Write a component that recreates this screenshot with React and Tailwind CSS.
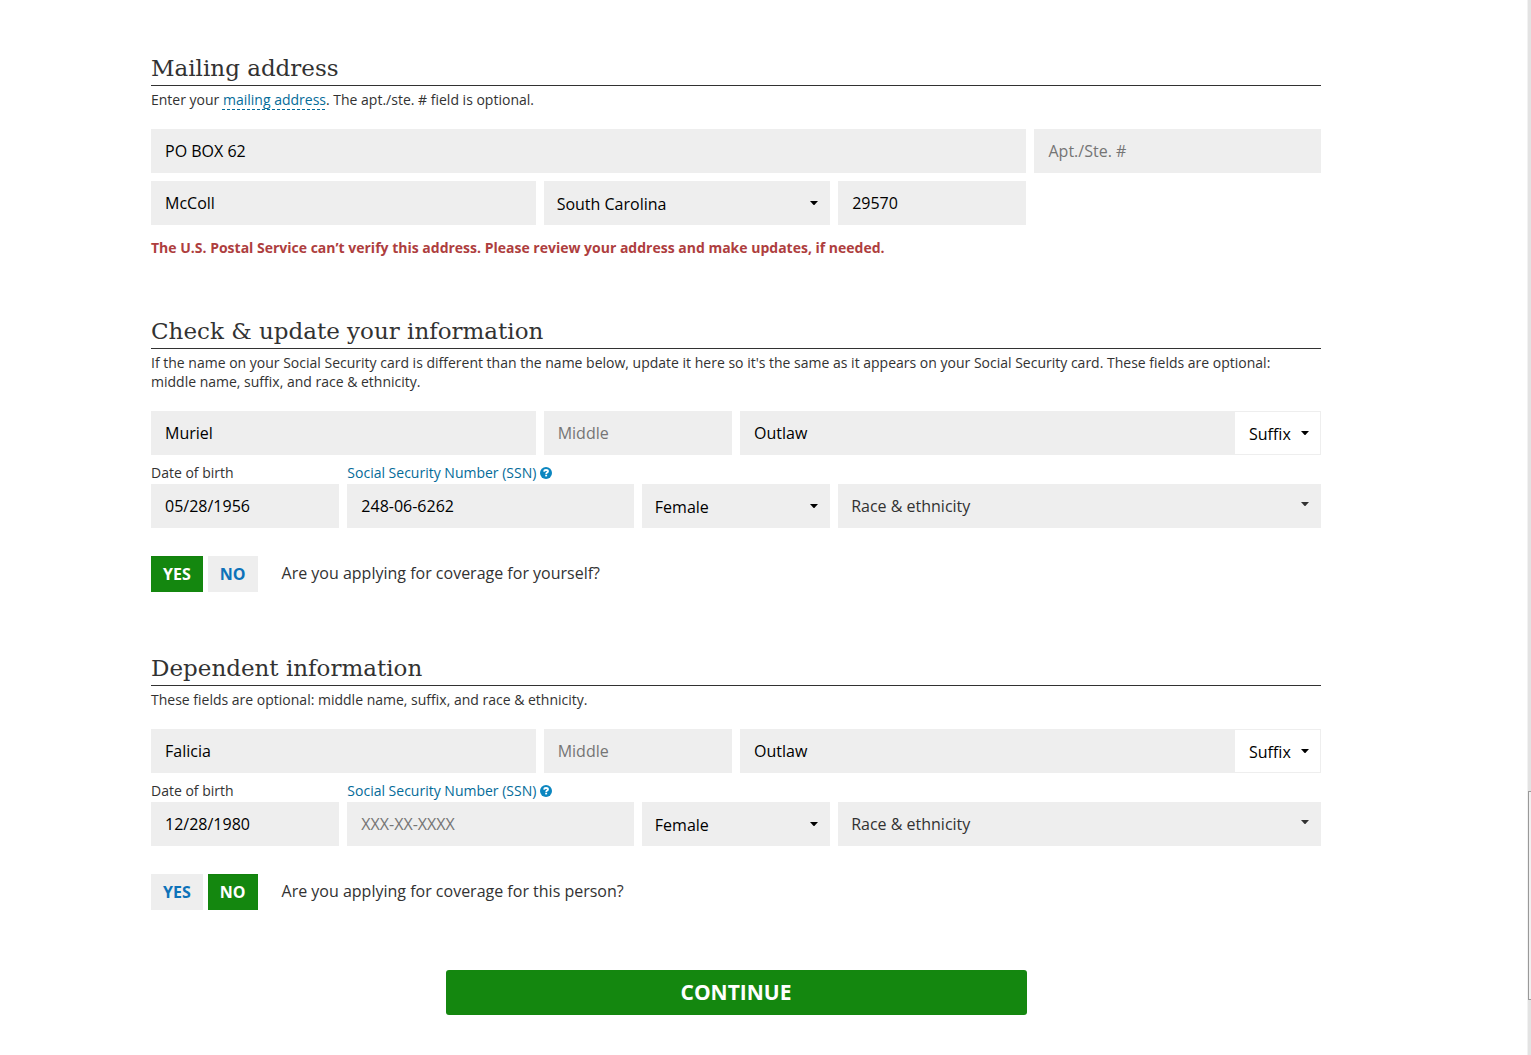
import { useState } from "react";

const fieldBase =
  "block h-11 w-full rounded-none border-0 bg-[#eeeeee] px-[14px] text-[16px] text-black placeholder:text-[#757575] placeholder:opacity-100 outline-none focus:ring-1 focus:ring-[#0071a3]";

function Caret({ color = "text-black" }) {
  return (
    <svg viewBox="0 0 8 4" className={`h-1 w-2 ${color}`} aria-hidden="true">
      <path d="M0 0h8L4.6 3.7a.9.9 0 0 1-1.2 0z" fill="currentColor" />
    </svg>
  );
}

function TextField({ label, value, placeholder }) {
  return <input type="text" aria-label={label} defaultValue={value} placeholder={placeholder} className={fieldBase} />;
}

function SelectField({ label, options, className = "" }) {
  return (
    <div className={`relative ${className}`}>
      <select
        aria-label={label}
        className="block h-11 w-full appearance-none rounded-none bg-[#eeeeee] pt-[2px] pr-6 pl-[13px] text-[16px] text-black outline-none"
      >
        {options.map((o) => (
          <option key={o}>{o}</option>
        ))}
      </select>
      <span className="pointer-events-none absolute top-5 right-3">
        <Caret />
      </span>
    </div>
  );
}

function HelpIcon() {
  return (
    <svg viewBox="0 0 12 12" className="size-3" aria-hidden="true">
      <circle cx="6" cy="6" r="6" fill="#0b86c0" />
      <path
        d="M4 4.6C4.1 3.5 4.9 3 6 3c1.200 0 2 .5 2 1.400C8 5.600 6.200 5.500 6.200 6.900"
        fill="none"
        stroke="#fff"
        strokeWidth="1.8"
      />
      <rect x="5.2" y="7.7" width="1.900" height="1.700" fill="#fff" />
    </svg>
  );
}

function Section({ title, intro, children }) {
  return (
    <section>
      <h2 className="h-[34px] border-b border-[#323232] font-['DejaVu_Serif',serif] text-[23px] leading-8 text-[#323232]">
        {title}
      </h2>
      <p className="mt-1 mb-5 pr-4 text-[14px] leading-[19px]">{intro}</p>
      {children}
    </section>
  );
}

function Choice({ active, onClick, children }) {
  return (
    <button
      type="button"
      aria-pressed={active}
      onClick={onClick}
      className={`h-9 px-3 text-[16px] font-bold ${
        active ? "bg-[#14870f] text-white inset-shadow-xs" : "bg-[#eeeeee] text-[#0d72b9]"
      }`}
    >
      {children}
    </button>
  );
}

function PersonForm({ id, first, last, birth, ssn, question, applying }) {
  const [yes, setYes] = useState(applying);
  return (
    <>
      <div className="grid grid-cols-12 gap-x-2">
        <div className="col-span-4">
          <TextField label="First name" value={first} />
        </div>
        <div className="col-span-2">
          <TextField label="Middle name" placeholder="Middle" />
        </div>
        <div className="col-span-6 flex">
          <div className="flex-1">
            <TextField label="Last name" value={last} />
          </div>
          <div className="relative w-[86px]">
            <select
              aria-label="Suffix"
              className="block h-11 w-full appearance-none rounded-none border border-l-0 border-[#eeeeee] bg-white pt-[2px] pl-[14px] text-[16px] text-black outline-none"
            >
              <option>Suffix</option>
              <option>Jr.</option>
              <option>Sr.</option>
            </select>
            <span className="pointer-events-none absolute top-5 right-3">
              <Caret />
            </span>
          </div>
        </div>
      </div>

      <div className="grid grid-cols-12 items-end gap-x-2 pt-2">
        <div className="col-span-2">
          <label htmlFor={`${id}-birth`} className="block pb-[2px] text-[14px] leading-[19px]">
            Date of birth
          </label>
          <input id={`${id}-birth`} type="text" defaultValue={birth} className={fieldBase} />
        </div>
        <div className="col-span-3">
          <label
            htmlFor={`${id}-ssn`}
            className="flex items-center gap-1 pb-[2px] text-[14px] leading-[19px] whitespace-nowrap text-[#046b99]"
          >
            Social Security Number (SSN)
            <HelpIcon />
          </label>
          <input id={`${id}-ssn`} type="text" defaultValue={ssn} placeholder="XXX-XX-XXXX" className={fieldBase} />
        </div>
        <SelectField label="Sex" options={["Female", "Male"]} className="col-span-2" />
        <button
          type="button"
          className="relative col-span-5 h-11 bg-[#eeeeee] pl-[13px] text-left text-[16px] text-[#323232]"
        >
          Race &amp; ethnicity
          <span className="absolute top-[18px] right-3">
            <Caret color="text-[#323232]" />
          </span>
        </button>
      </div>

      <div className="mt-7 flex items-center" role="group" aria-labelledby={`${id}-question`}>
        <div className="flex gap-[5px]">
          <Choice active={yes} onClick={() => setYes(true)}>
            YES
          </Choice>
          <Choice active={!yes} onClick={() => setYes(false)}>
            NO
          </Choice>
        </div>
        <p id={`${id}-question`} className="ml-6 pb-[2px] text-[16px] leading-6">
          {question}
        </p>
      </div>
    </>
  );
}

export default function App() {
  return (
    <div className="flex min-h-screen bg-white font-['Open_Sans',sans-serif] text-[#323232]">
      <form
        className="flex min-w-0 flex-1 flex-col gap-[60px] pt-[52px] pr-[206px] pb-10 pl-[151px]"
        onSubmit={(e) => e.preventDefault()}
      >
        <Section
          title="Mailing address"
          intro={
            <>
              Enter your{" "}
              <a
                href="#mailing"
                className="text-[#046b99] underline decoration-dashed decoration-1 underline-offset-4 [text-decoration-skip-ink:none]"
              >
                mailing address
              </a>
              . The apt./ste. # field is optional.
            </>
          }
        >
          <div className="grid grid-cols-12 gap-2">
            <div className="col-span-9">
              <TextField label="Street address" value="PO BOX 62" />
            </div>
            <div className="col-span-3">
              <TextField label="Apartment or suite number" placeholder="Apt./Ste. #" />
            </div>
            <div className="col-span-4">
              <TextField label="City" value="McColl" />
            </div>
            <SelectField label="State" options={["South Carolina", "North Carolina"]} className="col-span-3" />
            <div className="col-span-2">
              <TextField label="ZIP code" value="29570" />
            </div>
          </div>
          <p role="alert" className="mt-4 text-[14px] leading-[14px] font-bold text-[#ae3e3e]">
            The U.S. Postal Service can’t verify this address. Please review your address and make updates, if needed.
          </p>
        </Section>

        <Section
          title="Check & update your information"
          intro="If the name on your Social Security card is different than the name below, update it here so it's the same as it appears on your Social Security card. These fields are optional: middle name, suffix, and race & ethnicity."
        >
          <PersonForm
            id="self"
            first="Muriel"
            last="Outlaw"
            birth="05/28/1956"
            ssn="248-06-6262"
            question="Are you applying for coverage for yourself?"
            applying={true}
          />
        </Section>

        <Section
          title="Dependent information"
          intro="These fields are optional: middle name, suffix, and race & ethnicity."
        >
          <PersonForm
            id="dependent"
            first="Falicia"
            last="Outlaw"
            birth="12/28/1980"
            question="Are you applying for coverage for this person?"
            applying={false}
          />
        </Section>

        <div className="grid grid-cols-12 gap-x-2">
          <button
            type="submit"
            className="col-span-6 col-start-4 h-[45px] rounded-[3px] bg-[#14870f] text-[21px] font-bold text-white"
          >
            CONTINUE
          </button>
        </div>
      </form>

      <div className="flex w-[4px] flex-col border-l border-[#f2f2f2] bg-[#e3e3e3]" aria-hidden="true">
        <div className="flex-[792]" />
        <div className="flex-[208] rounded-l-[1px] border border-r-0 border-[#999999] bg-[#f1f1f1]" />
        <div className="flex-[55]" />
      </div>
    </div>
  );
}
